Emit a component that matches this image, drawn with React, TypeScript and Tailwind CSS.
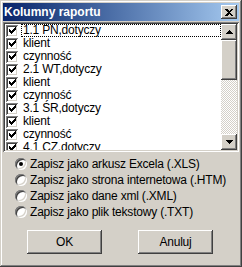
const columns = [
  "1.1 PN,dotyczy",
  "klient",
  "czynność",
  "2.1 WT,dotyczy",
  "klient",
  "czynność",
  "3.1 ŚR,dotyczy",
  "klient",
  "czynność",
  "4.1 CZ,dotyczy",
];

const formats = [
  "Zapisz jako arkusz Excela (.XLS)",
  "Zapisz jako strona internetowa (.HTM)",
  "Zapisz jako dane xml (.XML)",
  "Zapisz jako plik tekstowy (.TXT)",
];

const raised =
  "bg-[#d4d0c8] shadow-[inset_-1px_-1px_#404040,inset_1px_1px_#fff,inset_-2px_-2px_#808080,inset_2px_2px_#d4d0c8]";
const sunken =
  "shadow-[inset_1px_1px_#808080,inset_-1px_-1px_#fff,inset_2px_2px_#404040,inset_-2px_-2px_#d4d0c8]";

function CheckBox() {
  return (
    <span className={`flex h-[12px] w-[12px] shrink-0 items-center justify-center bg-white ${sunken}`}>
      <svg width="7" height="7" viewBox="0 0 7 7" shapeRendering="crispEdges">
        <path
          d="M0 2h1v3h-1z M1 3h1v3h-1z M2 4h1v3h-1z M3 3h1v3h-1z M4 2h1v3h-1z M5 1h1v3h-1z M6 0h1v3h-1z"
          fill="#000"
        />
      </svg>
    </span>
  );
}

function Arrow({ down }: { down?: boolean }) {
  return (
    <svg width="7" height="4" viewBox="0 0 7 4" shapeRendering="crispEdges">
      <path d={down ? "M0 0h7l-3.5 4z" : "M3.5 0l3.5 4h-7z"} fill="#000" />
    </svg>
  );
}

function Radio({ checked }: { checked?: boolean }) {
  return (
    <span className="flex h-[12px] w-[12px] shrink-0 items-center justify-center rounded-full bg-white shadow-[inset_1px_1px_#808080,inset_-1px_-1px_#fff,inset_2px_2px_#404040,inset_-2px_-2px_#d4d0c8]">
      {checked && <span className="h-[4px] w-[4px] rounded-full bg-black" />}
    </span>
  );
}

export default function App() {
  return (
    <div className="flex h-[267px] w-[242px] flex-col bg-[#d4d0c8] p-[3px] font-['Liberation_Sans',Arial,sans-serif] text-[12px] tracking-[-0.2px] text-black shadow-[inset_-1px_-1px_#404040,inset_1px_1px_#d4d0c8,inset_-2px_-2px_#808080,inset_2px_2px_#fff]">
      <div className="flex h-[18px] items-center bg-linear-to-r from-[#0a246a] to-[#a6caf0] pl-[1px] pr-[2px]">
        <span className="flex-1 text-[12px] font-bold tracking-normal text-white">Kolumny raportu</span>
        <span className={`flex h-[14px] w-[16px] items-center justify-center ${raised}`}>
          <svg width="8" height="7" viewBox="0 0 8 7" shapeRendering="crispEdges">
            <path d="M0 0h2l2 2 2-2h2l-3 3.5 3 3.5h-2l-2-2-2 2h-2l3-3.5z" fill="#000" />
          </svg>
        </span>
      </div>

      <div className={`mt-[1px] flex h-[130px] bg-white p-[2px] ${sunken}`}>
        <div className="flex-1 overflow-hidden">
          {columns.map((c, i) => (
            <div key={i} className="flex h-[13px] items-center pl-[1px]">
              <CheckBox />
              <span
                className={`ml-[3px] flex h-[13px] flex-1 items-center pl-[1px] leading-[13px] ${
                  i === 0 ? "border border-dotted border-black" : "border border-transparent"
                }`}
              >
                {c}
              </span>
            </div>
          ))}
        </div>
        <div className="flex w-[16px] flex-col">
          <span className={`flex h-[16px] items-center justify-center ${raised}`}>
            <Arrow />
          </span>
          <span className={`h-[40px] ${raised}`} />
          <span className="flex-1 bg-[repeating-conic-gradient(#d4d0c8_0_25%,#fff_0_50%)] bg-[length:2px_2px]" />
          <span className={`flex h-[16px] items-center justify-center ${raised}`}>
            <Arrow down />
          </span>
        </div>
      </div>

      <div className="mt-[4px] flex flex-col pl-[12px]">
        {formats.map((f, i) => (
          <div key={f} className="flex h-[16px] items-center gap-[3px]">
            <Radio checked={i === 0} />
            <span>{f}</span>
          </div>
        ))}
      </div>

      <div className="mt-[10px] flex gap-[36px] pl-[24px]">
        <button className={`h-[24px] w-[75px] ${raised}`}>OK</button>
        <button className={`h-[24px] w-[75px] ${raised}`}>Anuluj</button>
      </div>
    </div>
  );
}
